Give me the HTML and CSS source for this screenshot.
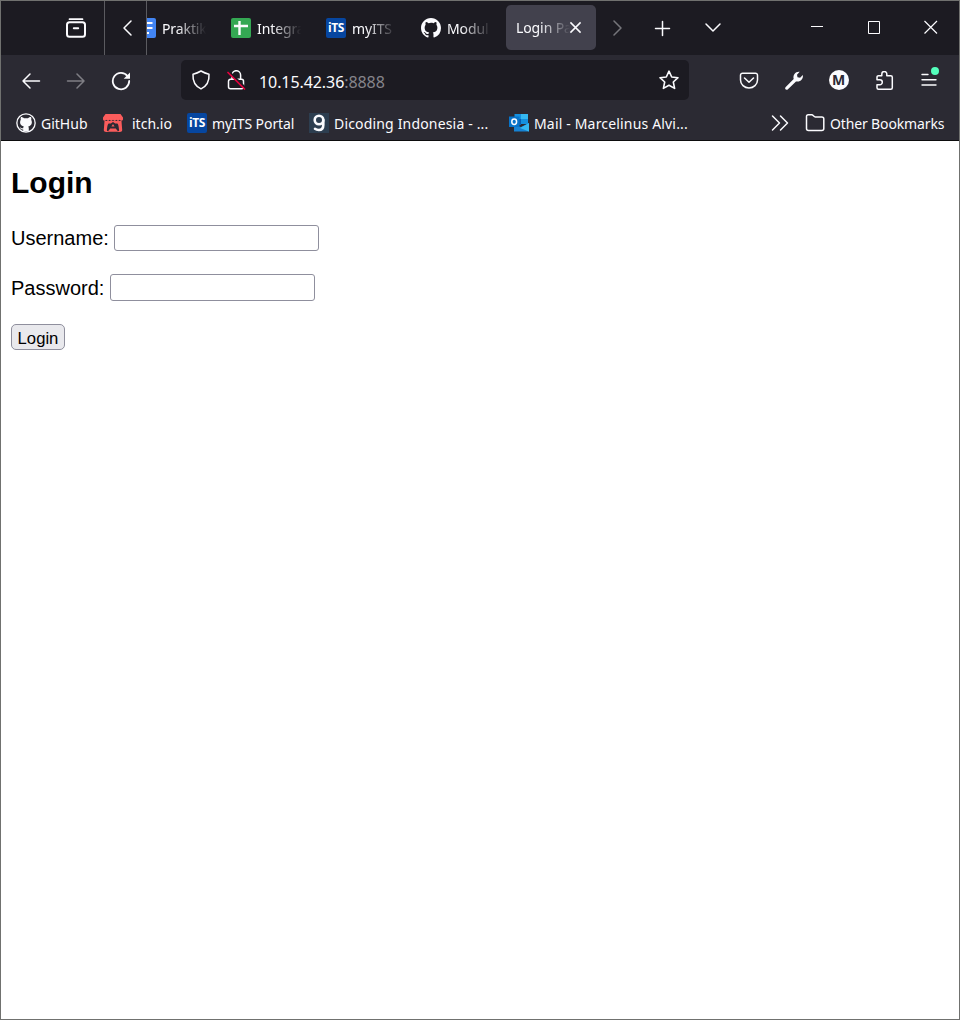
FILE: index.html
```
<!DOCTYPE html>
<html lang="en">
<head>
<meta charset="utf-8">
<title>Login Page</title>
<link rel="stylesheet" href="styles.css">
</head>
<body>
<div class="window">
  <header class="tabstrip">
    <div class="slot archive"><svg class="icon" viewBox="0 0 20 20"><path d="M3.5 1.2h13" stroke-width="1.7"/><rect x="1" y="4.3" width="18" height="14.5" rx="2.5" stroke-width="2"/><path d="M7.8 10.2h4.4" stroke-width="2"/></svg></div>
    <div class="slot scroll-left"><svg class="icon" viewBox="0 0 20 20"><path d="M13 3 6 10l7 7"/></svg></div>
    <div class="tabs">
      <div class="tab"><svg class="icon" viewBox="0 0 20 20"><rect width="20" height="20" rx="2" class="blue"/><path d="M4 5h12.5M4 10h12.5M4 15h9" stroke-width="2.2" stroke-linecap="butt"/></svg><span class="label">Praktik</span></div>
      <div class="tab"><svg class="icon" viewBox="0 0 20 20"><rect width="20" height="20" rx="2" class="green"/><path d="M3 8h14M8.5 3v14" stroke-width="2.4" stroke-linecap="butt"/></svg><span class="label">Integra</span></div>
      <div class="tab"><span class="its">iTS</span><span class="label">myITS</span></div>
      <div class="tab"><svg class="icon solid" viewBox="0 0 16 16"><path d="M8 0C3.58 0 0 3.58 0 8c0 3.54 2.29 6.53 5.47 7.59.4.07.55-.17.55-.38 0-.19-.01-.82-.01-1.49-2.01.37-2.53-.49-2.69-.94-.09-.23-.48-.94-.82-1.13-.28-.15-.68-.52-.01-.53.63-.01 1.08.58 1.23.82.72 1.21 1.87.87 2.33.66.07-.52.28-.87.51-1.07-1.78-.2-3.64-.89-3.64-3.95 0-.87.31-1.59.82-2.15-.08-.2-.36-1.02.08-2.12 0 0 .67-.21 2.2.82A7.6 7.6 0 0 1 8 3.86c.68 0 1.36.09 2 .27 1.53-1.04 2.2-.82 2.2-.82.44 1.1.16 1.92.08 2.12.51.56.82 1.27.82 2.15 0 3.07-1.87 3.75-3.65 3.95.29.25.54.73.54 1.48 0 1.07-.01 1.93-.01 2.2 0 .21.15.46.55.38A8 8 0 0 0 16 8c0-4.42-3.58-8-8-8z"/></svg><span class="label">Modul</span></div>
      <div class="tab active"><span class="label">Login Pa</span><svg class="tab-close" viewBox="0 0 12 12"><path d="m1.3 1.3 9.4 9.4m0-9.4-9.4 9.4"/></svg></div>
    </div>
    <div class="slot scroll-right dim"><svg class="icon" viewBox="0 0 20 20"><path d="m7 3 7 7-7 7"/></svg></div>
    <div class="slot new-tab"><svg class="icon" viewBox="0 0 20 20"><path d="M3.500 10.500h14M10.500 3.500v14"/></svg></div>
    <div class="slot list-tabs"><svg class="icon" viewBox="0 0 20 20"><path d="m3 6 7 7 7-7"/></svg></div>
    <div class="controls">
      <div class="slot"><svg class="icon thin" viewBox="0 0 20 20"><path d="M4 9.500h12"/></svg></div>
      <div class="slot"><svg class="icon thin" viewBox="0 0 20 20"><path d="M4.500 4.500h11v12h-11z"/></svg></div>
      <div class="slot"><svg class="icon thin" viewBox="0 0 20 20"><path d="m3.500 4 12.500 12.500M16 4 3.500 16.500" stroke-width="1.2"/></svg></div>
    </div>
  </header>
  <nav class="toolbar">
    <div class="slot"><svg class="icon" viewBox="0 0 20 20"><path d="M18.500 10H2m7-7-7 7 7 7"/></svg></div>
    <div class="slot dim"><svg class="icon" viewBox="0 0 20 20"><path d="M1.500 10H18m-7-7 7 7-7 7"/></svg></div>
    <div class="slot"><svg class="icon" viewBox="0 0 20 20"><path d="M16.600 5.200A8.200 8.200 0 1 0 18.200 10" stroke-width="1.800"/><path class="fill" d="M19 1.500v6.300h-6.300z"/></svg></div>
    <div class="urlbar">
      <svg class="icon" viewBox="0 0 20 20"><path d="M10 1c2.500 1.500 5 2.500 8 3.200.4 6.300-2 11.800-8 14.700C4 16 1.600 10.500 2 4.200 5 3.500 7.500 2.500 10 1z"/></svg>
      <svg class="icon lock" viewBox="0 0 20 20"><path d="M6 9V5a4.300 4.300 0 0 1 8.600 0v4M4.500 9.300h11a2 2 0 0 1 2 2v5.500a2 2 0 0 1-2 2h-11a2 2 0 0 1-2-2v-5.500a2 2 0 0 1 2-2z"/><path class="gap" d="m3 1.500 17 17"/><path class="slash" d="m2 2.500 16.500 16.500"/></svg>
      <span class="address">10.15.42.36<span class="port">:8888</span></span>
      <svg class="icon" viewBox="0 0 20 20"><path d="m10 1.200 2.700 5.800 6.300.7-4.700 4.300 1.300 6.400L10 15.300l-5.600 3.100L5.700 12 1 7.700 7.300 7z" stroke-width="1.600"/></svg>
    </div>
    <div class="tools">
      <div class="slot"><svg class="icon" viewBox="0 0 20 20"><path d="M3.500 2.200h13a2 2 0 0 1 2 2V9a8.500 8 0 0 1-17 0V4.200a2 2 0 0 1 2-2zM5.500 7 10 11.300 14.500 7"/></svg></div>
      <div class="slot"><svg class="icon" viewBox="0 0 20 20"><path class="fill" d="M1.500 16.200 9.700 8C8.700 4.100 11.400.3 15.700.8L13 3.700l.5 2.500 2.600.5L18.800 4c.9 4-2.700 7.500-6.800 6.400L3.700 18.400c-1.500 1.300-3.400-.7-2.200-2.200z"/></svg></div>
      <div class="slot"><span class="avatar">M</span></div>
      <div class="slot"><svg class="icon" viewBox="0 0 20 20"><path d="M3 7.700V6.200a1.500 1.500 0 0 1 1.500-1.500h3.300V3a2.500 2.500 0 0 1 5 0v1.700h4a1.500 1.500 0 0 1 1.500 1.500v10.600a1.500 1.500 0 0 1-1.500 1.500H4.500a1.500 1.500 0 0 1-1.500-1.500v-3h2.800a2.400 2.400 0 0 0 0-5H3z"/></svg></div>
      <div class="slot menu"><svg class="icon" viewBox="0 0 20 20"><path d="M3 3.500h6M3 8.700h14M3 14h14" stroke-width="1.400"/></svg><span class="badge"></span></div>
    </div>
  </nav>
  <div class="bookmarks">
    <div class="bookmark github"><svg class="icon" viewBox="0 0 20 20"><circle class="fill" cx="10" cy="10" r="9.800"/><circle class="dark" cx="10" cy="10" r="8.500"/><path class="fill" d="M5 4c1.300 0 2.300.7 3 1.200h4c.8-.6 1.800-1.200 3-1.200.5 1.200.4 2 .2 2.700 1.600 3 .3 6.200-3 6.700.5.600.6 1.300.6 2V18a9 9 0 0 1-5.600 0v-1.500c-2.100.3-2.600-1-3.500-2 .8-.2 1.700 1 3.500.7 0-.7.2-1.300.6-1.800-3.400-.6-4.600-3.700-3-6.700C4.600 6 4.500 5.200 5 4z"/></svg><span class="text">GitHub</span></div>
    <div class="bookmark itch"><svg class="icon" viewBox="0 0 20 20"><path class="red" d="M2.500 1h15L20 4.500v2c-.5 1.700-2.700 1.700-3.300.3-.8 1.500-2.700 1.500-3.300 0-.8 1.500-2.700 1.500-3.400 0-.7 1.500-2.600 1.500-3.400 0-.6 1.500-2.500 1.500-3.300 0C2.700 8.200.5 8.200 0 6.500v-2z"/><path class="red" d="M1.500 8h17l.7 9c0 2.300-2.500 2-4.200 1.700H5C3.300 19 .8 19.300.8 17z"/><path class="dark" d="M5.800 10.500h2L10 9l2.200 1.500h2c1.200 0 1.700 4.500 1.900 6.500.1 1.300-1.300 1.200-1.800.4L12.800 15.500H7.200l-1.500 1.900c-.5.8-1.900.9-1.800-.4.2-2 .7-6.500 1.900-6.500z"/><path class="red" d="m10 11 1.600 2.500H8.400z"/></svg><span class="text">itch.io</span></div>
    <div class="bookmark portal"><span class="its">iTS</span><span class="text">myITS Portal</span></div>
    <div class="bookmark dicoding"><svg class="icon" viewBox="0 0 20 20"><path class="slate" d="M0 0h20v20H0z"/><circle cx="10" cy="7" r="4.300" stroke-width="2.600"/><path d="M14.300 7v5c0 3.200-1.500 5-4.500 5-1.500 0-2.800-.4-3.800-1.200" stroke-width="2.600"/></svg><span class="text">Dicoding Indonesia - ...</span></div>
    <div class="bookmark mail"><svg class="icon" viewBox="0 0 20 20"><path class="sky" d="M5.500 1H19v10H5.500z"/><path class="light" d="M12 1h7v5h-7z"/><path class="navy" d="M5.500 6H12v6H5.500z"/><path class="deep" d="M5 12l7 2 8-4v8.500H5z"/><path class="light" d="m20 10-9 5 9 3.500z"/><path class="cobalt" d="M0 3.500h10.500V14H0z"/><ellipse cx="5.200" cy="8.700" rx="2.400" ry="2.700" stroke-width="1.500"/></svg><span class="text">Mail - Marcelinus Alvi...</span></div>
    <div class="overflow"><svg class="icon" viewBox="0 0 20 20"><path d="m2.500 3 7 7-7 7M10.500 3l7 7-7 7"/></svg></div>
    <div class="bookmark other"><svg class="icon" viewBox="0 0 20 20"><path d="M1.500 15.500v-12A1.800 1.800 0 0 1 3.300 1.700h3.500c1.300 0 2 2.300 3.500 2.300h6.500a2 2 0 0 1 2 2v9.500a2 2 0 0 1-2 2H3.500a2 2 0 0 1-2-2z"/></svg><span class="text">Other Bookmarks</span></div>
  </div>
  <main class="page">
    <h2 class="title">Login</h2>
    <form class="login">
      <div class="field"><label for="username">Username:</label><input class="input username" type="text" id="username"></div>
      <div class="field"><label for="password">Password:</label><input class="input" type="password" id="password"></div>
      <button class="submit" type="button">Login</button>
    </form>
  </main>
</div>
</body>
</html>
```
FILE: styles.css
```
* { box-sizing: border-box; }
body { margin: 0; background: #fff; font-family: "Noto Sans", "Open Sans", sans-serif; }
.window { display: flex; flex-direction: column; width: 960px; height: 1020px; border: 1px solid #70716f; color: #fbfbfe; font-size: 14px; }
.icon { display: block; flex: none; width: 20px; height: 20px; fill: none; stroke: #fbfbfe; stroke-width: 1.5; stroke-linecap: round; stroke-linejoin: round; }
.solid, .fill { fill: #fbfbfe; stroke: none; }
.blue { fill: #4285f4; stroke: none; }
.green { fill: #34a853; stroke: none; }
.red { fill: #fa5c5c; stroke: none; }
.dark { fill: #2b2a33; stroke: none; }
.slate { fill: #2d3e50; stroke: none; }
.sky { fill: #1490df; stroke: none; }
.light { fill: #35b8f1; stroke: none; }
.navy { fill: #0a5db0; stroke: none; }
.deep { fill: #1682d4; stroke: none; }
.cobalt { fill: #0873c9; stroke: none; }
.thin { stroke-width: 1; stroke-linecap: butt; stroke-linejoin: miter; }
.slot { display: flex; flex: none; align-items: center; justify-content: center; width: 45px; }
.dim { opacity: .4; }

.tabstrip { display: flex; flex: none; height: 54px; background: #1c1b22; }
.archive { width: 104px; padding-left: 47px; border-right: 1px solid #5b5b60; }
.scroll-left { width: 42px; padding-left: 5px; border-right: 1px solid #5b5b60; }
.tabs { display: flex; flex: none; width: 449px; overflow: hidden; }
.tab { display: flex; flex: none; align-items: center; gap: 6px; width: 95px; padding-left: 15px; }
.tab:first-child { margin-left: -26px; }
.label { width: 48px; white-space: nowrap; letter-spacing: -.1px; mask-image: linear-gradient(to right, #000 30%, transparent 92%); }
.active { gap: 0; width: 90px; height: 45px; margin: 4px 0 0 5px; padding-left: 10px; border-radius: 5px; background: #42414d; }
.active .label { width: 59px; margin-right: -6px; mask-image: linear-gradient(to right, #000 40%, transparent 92%); }
.tab-close { flex: none; width: 13px; height: 13px; fill: none; stroke: #fbfbfe; stroke-width: 1.4; }
.its { display: grid; flex: none; place-items: center; width: 20px; height: 20px; border-radius: 2px; background: #0646a0; color: #fff; font: bold 12px/1 "Open Sans", sans-serif; letter-spacing: -.4px; }
.scroll-right { width: 42px; }
.new-tab { width: 48px; }
.list-tabs { width: 54px; }
.controls { display: flex; margin-left: auto; }
.controls .slot { width: 57px; padding-bottom: 2px; }

.toolbar { display: flex; flex: none; height: 51px; padding: 0 8px 0 7px; background: #2b2a33; }
.urlbar { display: flex; align-items: center; width: 508px; height: 40px; margin: 5px 0 0 38px; padding: 0 10px; border-radius: 5px; background: #1c1b22; font-size: 16px; letter-spacing: -.08px; }
.lock { margin: 0 13px 0 15px; }
.lock .gap { stroke: #1c1b22; stroke-width: 2; }
.lock .slash { stroke: #e6003e; stroke-width: 1.7; }
.address { flex: 1; padding-top: 3px; }
.port { color: #85848b; }
.tools { display: flex; margin-left: auto; }
.avatar { display: grid; place-items: center; width: 20px; height: 20px; margin-bottom: 1px; border-radius: 50%; background: #fbfbfe; color: #2b2a33; font: bold 14px/1 "Noto Sans", sans-serif; }
.menu { position: relative; }
.badge { position: absolute; top: 12px; right: 12px; width: 8px; height: 8px; border-radius: 50%; background: #54ffbd; }

.bookmarks { display: flex; flex: none; align-items: center; height: 35px; padding: 0 0 0 15px; border-bottom: 1px solid #0c0c0d; background: #2b2a33; }
.bookmark { display: flex; flex: none; align-items: center; gap: 5px; white-space: nowrap; }
.text { padding-top: 1px; }
.github { width: 87px; }
.itch { gap: 9px; width: 84px; }
.portal { width: 122px; letter-spacing: -.08px; }
.dicoding { width: 200px; letter-spacing: .17px; }
.mail { width: 199px; letter-spacing: .17px; }
.overflow { margin-left: 62px; margin-right: 15px; }
.other { letter-spacing: -.14px; }

.page { flex: 1; padding: 0 10px; background: #fff; color: #000; font: 20px/23px "Liberation Sans", Arial, sans-serif; }
.title { margin: 25px 0; font-size: 30px; line-height: 34px; }
.login { display: flex; flex-direction: column; align-items: flex-start; }
.field { display: flex; align-items: flex-start; gap: 6px; height: 49px; }
.field label { padding-top: 2px; }
.field + .field label { padding-top: 3px; }
.input { width: 205px; height: 27px; margin: 0; border: 1px solid #8f8f9d; border-radius: 3px; background: #fff; }
.username { height: 26px; margin-left: -1px; }
.submit { width: 54px; height: 26px; margin-top: 1px; padding: 4px 0 0; border: 1px solid #8f8f9d; border-radius: 5px; background: #e9e9ed; color: #000; font: 16.67px/1 "Liberation Sans", Arial, sans-serif; }
```
